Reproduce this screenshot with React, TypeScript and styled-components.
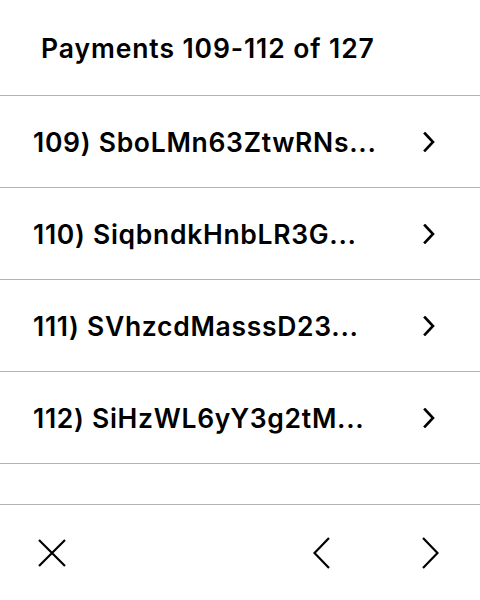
import React from "react";
import styled, { createGlobalStyle } from "styled-components";

const Global = createGlobalStyle`
  html, body { margin: 0; padding: 0; background: #fff; }
  body { font-family: Inter, "Noto Sans", sans-serif; color: #000; }
`;

const Page = styled.div`
  width: 480px;
  height: 600px;
  display: flex;
  flex-direction: column;
  background: #fff;
  overflow: hidden;
`;

const Header = styled.div`
  height: 96px;
  display: flex;
  align-items: center;
  padding-left: 41px;
  border-bottom: 1px solid #b2b2b2;
  font-size: 26.5px;
  font-weight: 600;
  letter-spacing: 0.9px;
  box-sizing: border-box;
  flex: none;
`;

const List = styled.div`
  display: flex;
  flex-direction: column;
  flex: none;
`;

const Row = styled.div`
  height: 92px;
  box-sizing: border-box;
  border-bottom: 1px solid #b2b2b2;
  display: flex;
  align-items: center;
  justify-content: space-between;
  padding: 0 45px 0 33px;
`;

const RowText = styled.span`
  font-size: 26.5px;
  font-weight: 600;
  letter-spacing: 0.7px;
`;

const Spacer = styled.div`
  height: 41px;
  flex: none;
  border-bottom: 1px solid #b2b2b2;
  box-sizing: border-box;
`;

const Footer = styled.div`
  flex: 1;
  display: flex;
  align-items: center;
  padding: 0 0 0 38px;
`;

const IconButton = styled.div<{ $ml?: number }>`
  display: flex;
  align-items: center;
  justify-content: center;
  margin-left: ${(p) => p.$ml ?? 0}px;
`;

const rows = [
  "109) SboLMn63ZtwRNs...",
  "110) SiqbndkHnbLR3G...",
  "111) SVhzcdMasssD23...",
  "112) SiHzWL6yY3g2tM...",
];

const RowChevron = () => (
  <svg width="12" height="20" viewBox="0 0 12 20">
    <polyline points="2,1.5 10,10 2,18.5" fill="none" stroke="#000" strokeWidth="2.6" strokeLinecap="square" strokeLinejoin="miter" />
  </svg>
);

export default function App() {
  return (
    <>
      <Global />
      <Page>
        <Header>Payments 109-112 of 127</Header>
        <List>
          {rows.map((r) => (
            <Row key={r}>
              <RowText>{r}</RowText>
              <RowChevron />
            </Row>
          ))}
        </List>
        <Spacer />
        <Footer>
          <IconButton>
            <svg width="28" height="28" viewBox="0 0 28 28">
              <path d="M1 1 L27 27 M27 1 L1 27" stroke="#000" strokeWidth="2.2" fill="none" />
            </svg>
          </IconButton>
          <IconButton $ml={247}>
            <svg width="18" height="32" viewBox="0 0 18 32">
              <polyline points="16,1 1.5,16 16,31" fill="none" stroke="#000" strokeWidth="2.2" />
            </svg>
          </IconButton>
          <IconButton $ml={90}>
            <svg width="18" height="32" viewBox="0 0 18 32">
              <polyline points="2,1 16.5,16 2,31" fill="none" stroke="#000" strokeWidth="2.2" />
            </svg>
          </IconButton>
        </Footer>
      </Page>
    </>
  );
}
